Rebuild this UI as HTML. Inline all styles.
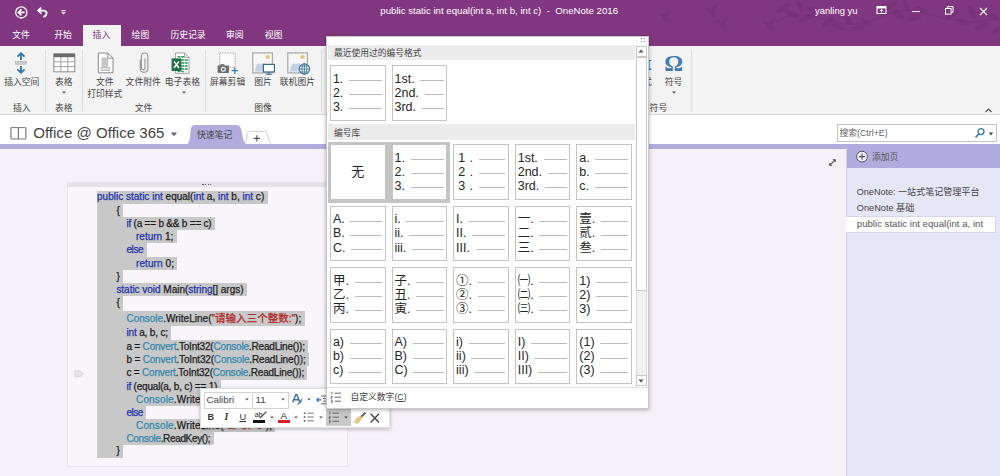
<!DOCTYPE html>
<html lang="zh-CN"><head><meta charset="utf-8"><title>OneNote 2016</title>
<style>
*{box-sizing:border-box;margin:0;padding:0}
html,body{width:1000px;height:476px;overflow:hidden}
body{position:relative;background:#f6f1f9;font-family:"Liberation Sans","Noto Sans CJK SC",sans-serif;}
.a{position:absolute;display:block}
.t{position:absolute;white-space:pre;}
.k{color:#2433ab} .c{color:#3388ad} .s{color:#b32525}
.sel{background:#c8c8c8;position:absolute;}
.z{font-size:10.5px}
.cell{position:absolute;width:55.5px;height:55.5px;background:#fff;border:1px solid #c4c4c4;padding:5.5px 2.6px 0 1.9px;}
.row{display:flex;align-items:center;height:14.1px;font-size:12.5px;line-height:14px;color:#262626;white-space:pre}
.row i{display:block;flex:1;height:1px;background:#bcbcbc;margin-left:5.7px;margin-top:3.6px}
</style></head><body>

<div class="a" style="left:0px;top:0px;width:1000px;height:46.3px;background:#81377f;"></div>
<svg class="a" style="left:0px;top:0px;" width="1000" height="46" viewBox="0 0 1000 46"><ellipse cx="783" cy="8" rx="7.5" ry="3.12" transform="rotate(-35 783 8)" fill="#6e2d6e" opacity="0.45"/><ellipse cx="792" cy="14" rx="7.5" ry="3.12" transform="rotate(25 792 14)" fill="#6e2d6e" opacity="0.45"/><ellipse cx="800" cy="6" rx="6.25" ry="2.6" transform="rotate(60 800 6)" fill="#6e2d6e" opacity="0.45"/><ellipse cx="806" cy="18" rx="7.5" ry="3.12" transform="rotate(-20 806 18)" fill="#6e2d6e" opacity="0.45"/><ellipse cx="812" cy="9" rx="6.25" ry="2.6" transform="rotate(10 812 9)" fill="#6e2d6e" opacity="0.45"/><ellipse cx="828" cy="22" rx="7.5" ry="3.12" transform="rotate(-40 828 22)" fill="#6e2d6e" opacity="0.45"/><ellipse cx="838" cy="27" rx="7.5" ry="2.8600000000000003" transform="rotate(15 838 27)" fill="#6e2d6e" opacity="0.45"/><ellipse cx="848" cy="20" rx="6.25" ry="2.6" transform="rotate(50 848 20)" fill="#6e2d6e" opacity="0.45"/><ellipse cx="858" cy="28" rx="7.5" ry="2.8600000000000003" transform="rotate(-15 858 28)" fill="#6e2d6e" opacity="0.45"/><ellipse cx="866" cy="22" rx="6.25" ry="2.6" transform="rotate(30 866 22)" fill="#6e2d6e" opacity="0.45"/><ellipse cx="890" cy="6" rx="7.5" ry="3.12" transform="rotate(-30 890 6)" fill="#6e2d6e" opacity="0.45"/><ellipse cx="898" cy="14" rx="7.5" ry="3.12" transform="rotate(35 898 14)" fill="#6e2d6e" opacity="0.45"/><ellipse cx="906" cy="5" rx="6.25" ry="2.6" transform="rotate(70 906 5)" fill="#6e2d6e" opacity="0.45"/><ellipse cx="914" cy="18" rx="7.5" ry="3.12" transform="rotate(-10 914 18)" fill="#6e2d6e" opacity="0.45"/><ellipse cx="921" cy="10" rx="6.25" ry="2.6" transform="rotate(20 921 10)" fill="#6e2d6e" opacity="0.45"/><ellipse cx="953" cy="14" rx="7.5" ry="3.12" transform="rotate(-35 953 14)" fill="#6e2d6e" opacity="0.45"/><ellipse cx="962" cy="22" rx="7.5" ry="3.12" transform="rotate(20 962 22)" fill="#6e2d6e" opacity="0.45"/><ellipse cx="972" cy="12" rx="7.5" ry="2.8600000000000003" transform="rotate(55 972 12)" fill="#6e2d6e" opacity="0.45"/><ellipse cx="982" cy="26" rx="7.5" ry="3.12" transform="rotate(-20 982 26)" fill="#6e2d6e" opacity="0.45"/><ellipse cx="992" cy="16" rx="7.5" ry="2.8600000000000003" transform="rotate(25 992 16)" fill="#6e2d6e" opacity="0.45"/><ellipse cx="997" cy="30" rx="6.25" ry="2.6" transform="rotate(-40 997 30)" fill="#6e2d6e" opacity="0.45"/><path d="M776 22C800 6 820 20 846 24S890 4 920 12S970 26 1000 18" stroke="#6e2d6e" stroke-width="1.4" fill="none" opacity="0.4"/><path transform="translate(664.7 15.7) scale(1.2)" d="M-5 -1C-3 -3 -1 -2 0 0C1 -3 3 -5 5 -5C4 -3 3 -1 2 1C3 3 3 4 2 5C0 4 -1 3 -2 1C-3 0 -4 0 -5 -1Z" fill="#6e2d6e" opacity="0.45"/><path transform="translate(711 10.5) scale(1.4)" d="M-5 -1C-3 -3 -1 -2 0 0C1 -3 3 -5 5 -5C4 -3 3 -1 2 1C3 3 3 4 2 5C0 4 -1 3 -2 1C-3 0 -4 0 -5 -1Z" fill="#6e2d6e" opacity="0.45"/><path transform="translate(721.7 22.7) scale(1.3)" d="M-5 -1C-3 -3 -1 -2 0 0C1 -3 3 -5 5 -5C4 -3 3 -1 2 1C3 3 3 4 2 5C0 4 -1 3 -2 1C-3 0 -4 0 -5 -1Z" fill="#6e2d6e" opacity="0.45"/><path transform="translate(769 23.8) scale(1.3)" d="M-5 -1C-3 -3 -1 -2 0 0C1 -3 3 -5 5 -5C4 -3 3 -1 2 1C3 3 3 4 2 5C0 4 -1 3 -2 1C-3 0 -4 0 -5 -1Z" fill="#6e2d6e" opacity="0.45"/></svg>
<svg class="a" style="left:14px;top:5px;" width="16" height="16" viewBox="0 0 16 16"><circle cx="7.3" cy="7.4" r="5.6" fill="none" stroke="#fff" stroke-width="1.3"/><path d="M10.6 7.4H4.8M7.4 4.4L4.4 7.4L7.4 10.4" fill="none" stroke="#fff" stroke-width="1.7"/></svg>
<svg class="a" style="left:36px;top:5px;" width="14" height="14" viewBox="0 0 14 14"><path d="M5.2 2.6L2.2 5.6L5.4 8.6M2.6 5.6H7.6C10.4 5.6 11.2 8 10.2 9.8C9.6 10.9 8.6 11.6 7.4 11.8" fill="none" stroke="#fff" stroke-width="1.8"/></svg>
<svg class="a" style="left:60px;top:9px;" width="8" height="7" viewBox="0 0 8 7"><rect x="1.3" y="1.2" width="4.4" height="1" fill="#fff"/><path d="M1.2 3.2H5.8L3.5 5.6Z" fill="#fff"/></svg>
<div class="t " style="left:380.3px;top:5.20px;font-size:9.67px;line-height:12px;color:#fff;">public static int equal(int a, int b, int c)  -  OneNote 2016</div>
<div class="t " style="left:815px;top:5.20px;font-size:9.46px;line-height:12px;color:#fff;">yanling yu</div>
<svg class="a" style="left:876px;top:5.4px;" width="12" height="11" viewBox="0 0 12 11"><rect x="1" y="1.5" width="9" height="7" fill="none" stroke="#fff" stroke-width="1"/><rect x="1" y="1.5" width="9" height="2" fill="#fff"/><path d="M5.5 7.6V4.6M4 6L5.5 4.5L7 6" stroke="#fff" stroke-width="0.9" fill="none"/></svg>
<div class="a" style="left:912px;top:10.9px;width:7.8px;height:1px;background:#f4eaf3;"></div>
<svg class="a" style="left:944px;top:5.4px;" width="11" height="11" viewBox="0 0 11 11"><rect x="1.5" y="3.5" width="5.6" height="5.6" fill="none" stroke="#fff" stroke-width="1"/><path d="M3.4 3.4V1.6H9V7.2H7.2" fill="none" stroke="#fff" stroke-width="1"/></svg>
<svg class="a" style="left:978px;top:5.5px;" width="11" height="11" viewBox="0 0 11 11"><path d="M2 2L9 9M9 2L2 9" stroke="#fff" stroke-width="1.1"/></svg>
<div class="a" style="left:83.2px;top:24.7px;width:37.8px;height:22px;background:#f3f3f3;"></div>
<div class="t " style="left:12.2px;top:29.00px;font-size:8.8px;line-height:12px;color:#fff;">文件</div>
<div class="t " style="left:54.2px;top:29.00px;font-size:8.8px;line-height:12px;color:#fff;">开始</div>
<div class="t " style="left:92.6px;top:29.00px;font-size:8.8px;line-height:12px;color:#81377f;">插入</div>
<div class="t " style="left:131.6px;top:29.00px;font-size:8.8px;line-height:12px;color:#fff;">绘图</div>
<div class="t " style="left:170.4px;top:29.00px;font-size:8.8px;line-height:12px;color:#fff;">历史记录</div>
<div class="t " style="left:226px;top:29.00px;font-size:8.8px;line-height:12px;color:#fff;">审阅</div>
<div class="t " style="left:264.8px;top:29.00px;font-size:8.8px;line-height:12px;color:#fff;">视图</div>
<div class="a" style="left:0px;top:46.3px;width:1000px;height:68.7px;background:#f3f3f3;border-bottom:1px solid #d8d8d8;"></div>
<div class="a" style="left:45px;top:50px;width:1px;height:62px;background:#dcdcdc;"></div>
<div class="a" style="left:82.4px;top:50px;width:1px;height:62px;background:#dcdcdc;"></div>
<div class="a" style="left:205.4px;top:50px;width:1px;height:62px;background:#dcdcdc;"></div>
<div class="a" style="left:320.6px;top:50px;width:1px;height:62px;background:#dcdcdc;"></div>
<div class="a" style="left:691.4px;top:50px;width:1px;height:62px;background:#dcdcdc;"></div>
<svg class="a" style="left:14px;top:52px;" width="14" height="22" viewBox="0 0 14 22"><path d="M7 1.4V8M3.4 4.6L7 1.2L10.6 4.6" fill="none" stroke="#3b78ad" stroke-width="1.9"/><path d="M7 20.6V14M3.4 17.4L7 20.8L10.6 17.4" fill="none" stroke="#3b78ad" stroke-width="1.9"/><rect x="1.6" y="9.6" width="10.8" height="2.6" fill="#d0d0d0" stroke="#a8a8a8" stroke-width="0.6"/></svg>
<div class="t" style="left:-38.20px;width:120px;text-align:center;top:76.00px;font-size:8.8px;line-height:12px;color:#444;">插入空间</div>
<div class="t" style="left:-38.20px;width:120px;text-align:center;top:102.30px;font-size:8.8px;line-height:12px;color:#444;">插入</div>
<svg class="a" style="left:52.5px;top:53px;" width="23" height="20" viewBox="0 0 23 20"><rect x="0.8" y="0.8" width="21" height="18" fill="#fff" stroke="#8a8a8a" stroke-width="1"/><rect x="0.8" y="0.8" width="21" height="3.4" fill="#6a6a6a"/><path d="M0.8 8.8H21.8M0.8 13.6H21.8M7.8 4.2V18.8M14.8 4.2V18.8" stroke="#9a9a9a" stroke-width="0.9"/></svg>
<div class="t" style="left:3.80px;width:120px;text-align:center;top:76.00px;font-size:8.8px;line-height:12px;color:#444;">表格</div>
<svg class="a" style="left:60.8px;top:90.6px;" width="6" height="4" viewBox="0 0 6 4"><path d="M0.7999999999999998 0.6H5.2L3 2.8000000000000003Z" fill="#666"/></svg>
<div class="t" style="left:3.80px;width:120px;text-align:center;top:102.30px;font-size:8.8px;line-height:12px;color:#444;">表格</div>
<svg class="a" style="left:96.5px;top:52px;" width="18" height="22" viewBox="0 0 18 22"><path d="M1.3 1H10.8L16 6.2V20.8H1.3Z" fill="#fff" stroke="#8a8a8a" stroke-width="1"/><path d="M10.8 1V6.2H16" fill="none" stroke="#8a8a8a" stroke-width="1"/><rect x="5" y="6" width="5.6" height="8.6" fill="#d6d6d6" stroke="#a0a0a0" stroke-width="0.6"/><rect x="4" y="15.6" width="8.6" height="3" fill="#e2e2e2" stroke="#a0a0a0" stroke-width="0.6"/><path d="M6 8H9.6M6 10H9.6M6 12H9.6" stroke="#9a9a9a" stroke-width="0.6"/></svg>
<div class="t" style="left:44.80px;width:120px;text-align:center;top:76.00px;font-size:8.8px;line-height:12px;color:#444;">文件</div>
<div class="t" style="left:44.80px;width:120px;text-align:center;top:87.80px;font-size:8.8px;line-height:12px;color:#444;">打印样式</div>
<svg class="a" style="left:138px;top:52px;" width="12" height="22" viewBox="0 0 12 22"><path d="M2.2 7.6V16.6C2.2 21.6 9.8 21.6 9.8 16.6V4.4C9.8 -0.2 3.4 -0.2 3.4 4.4V15.8C3.4 18.6 7 18.6 7 15.8V6.6" fill="none" stroke="#9a9a9a" stroke-width="1.15"/></svg>
<div class="t" style="left:83.20px;width:120px;text-align:center;top:76.00px;font-size:8.8px;line-height:12px;color:#444;">文件附件</div>
<svg class="a" style="left:170.5px;top:51.5px;" width="22" height="23" viewBox="0 0 22 23"><path d="M4.6 1H13.6L18 5.4V21.4H4.6Z" fill="#fff" stroke="#9a9a9a" stroke-width="0.9"/><path d="M13.6 1V5.4H18" fill="none" stroke="#9a9a9a" stroke-width="0.9"/><g fill="#3a9a68"><rect x="6.6" y="4" width="3" height="1.6"/><rect x="10.2" y="4" width="3" height="1.6"/><rect x="10.2" y="7.2" width="3" height="1.6"/><rect x="13.8" y="7.2" width="3" height="1.6"/><rect x="10.2" y="10.2" width="3" height="1.6"/><rect x="13.8" y="10.2" width="3" height="1.6"/><rect x="10.2" y="13.2" width="3" height="1.6"/><rect x="13.8" y="13.2" width="3" height="1.6"/><rect x="10.2" y="16.2" width="3" height="1.6"/><rect x="13.8" y="16.2" width="3" height="1.6"/><rect x="6.6" y="19" width="3" height="1.2"/><rect x="10.2" y="19" width="3" height="1.2"/></g><rect x="0.6" y="6.4" width="9.8" height="12.6" fill="#1f7145"/><path d="M3 9.4L8 16M8 9.4L3 16" stroke="#fff" stroke-width="1.5"/></svg>
<div class="t" style="left:122.40px;width:120px;text-align:center;top:76.00px;font-size:8.8px;line-height:12px;color:#444;">电子表格</div>
<svg class="a" style="left:181px;top:90.6px;" width="6" height="4" viewBox="0 0 6 4"><path d="M0.7999999999999998 0.6H5.2L3 2.8000000000000003Z" fill="#666"/></svg>
<div class="t" style="left:83.50px;width:120px;text-align:center;top:102.30px;font-size:8.8px;line-height:12px;color:#444;">文件</div>
<svg class="a" style="left:217px;top:52px;" width="23" height="22" viewBox="0 0 23 22"><rect x="2.6" y="1" width="15.6" height="14" fill="#fbfbfb" stroke="#9a9a9a" stroke-width="0.9" stroke-dasharray="1.4 1.2"/><rect x="0.6" y="13.4" width="11.4" height="7.6" rx="0.8" fill="#6e6e6e"/><rect x="3.4" y="12.2" width="4" height="2" fill="#6e6e6e"/><circle cx="6.3" cy="17.2" r="2.5" fill="#f3f3f3"/><circle cx="6.3" cy="17.2" r="1.3" fill="#6e6e6e"/><path d="M14.6 18.6H21M17.8 15.4V21.8" stroke="#3f7fb5" stroke-width="1.4"/></svg>
<div class="t" style="left:167.60px;width:120px;text-align:center;top:76.00px;font-size:8.8px;line-height:12px;color:#444;">屏幕剪辑</div>
<svg class="a" style="left:252.4px;top:52px;" width="24" height="23" viewBox="0 0 24 23"><rect x="0.8" y="0.9" width="19.6" height="20" fill="#f6f6f6" stroke="#adadad" stroke-width="1.3"/><circle cx="15.6" cy="5" r="2.1" fill="#e6c67c"/><path d="M2.6 19.4L4.4 13.6Q6.4 9.8 8.6 12.6L10 11.4Q12 10.2 13.2 12.6L15.4 19.4Z" fill="#c1d0e6"/><rect x="11.4" y="12.4" width="11" height="7.6" fill="#fbfdff" stroke="#3c6a86" stroke-width="1.2"/><path d="M16.9 20V22M14 22.3H19.8" stroke="#3c6a86" stroke-width="1.1"/></svg>
<div class="t" style="left:203.00px;width:120px;text-align:center;top:76.00px;font-size:8.8px;line-height:12px;color:#444;">图片</div>
<svg class="a" style="left:287px;top:52px;" width="24" height="23" viewBox="0 0 24 23"><rect x="0.8" y="0.9" width="19.6" height="20" fill="#f6f6f6" stroke="#adadad" stroke-width="1.3"/><circle cx="15.6" cy="5" r="2.1" fill="#e6c67c"/><path d="M2.6 19.4L4.4 13.6Q6.4 9.8 8.6 12.6L10 11.4Q12 10.2 13.2 12.6L15.4 19.4Z" fill="#c1d0e6"/><circle cx="17.4" cy="17" r="5.2" fill="#eef5f9" stroke="#3c7391" stroke-width="1.1"/><path d="M12.2 17H22.6M17.4 11.8V22.2M13.2 14H21.6M13.2 20H21.6" stroke="#3c7391" stroke-width="0.8" fill="none"/><ellipse cx="17.4" cy="17" rx="2.4" ry="5.2" fill="none" stroke="#3c7391" stroke-width="0.8"/></svg>
<div class="t" style="left:237.40px;width:120px;text-align:center;top:76.00px;font-size:8.8px;line-height:12px;color:#444;">联机图片</div>
<div class="t" style="left:203.00px;width:120px;text-align:center;top:102.30px;font-size:8.8px;line-height:12px;color:#444;">图像</div>
<div class="t" style="left:631.00px;width:30px;text-align:center;top:52.00px;font-size:20px;line-height:22px;color:#3f7fb5;font-family:&quot;Liberation Serif&quot;,serif;font-weight:bold;">π</div>
<div class="t" style="left:583.00px;width:120px;text-align:center;top:76.00px;font-size:8.8px;line-height:12px;color:#444;">公式</div>
<div class="t" style="left:658.60px;width:30px;text-align:center;top:50.60px;font-size:23.5px;line-height:24px;color:#3f7ab2;font-family:&quot;Liberation Serif&quot;,serif;font-weight:bold;">Ω</div>
<div class="t" style="left:613.60px;width:120px;text-align:center;top:76.00px;font-size:8.8px;line-height:12px;color:#444;">符号</div>
<svg class="a" style="left:670.8px;top:90.6px;" width="6" height="4" viewBox="0 0 6 4"><path d="M0.7999999999999998 0.6H5.2L3 2.8000000000000003Z" fill="#666"/></svg>
<div class="t" style="left:598.40px;width:120px;text-align:center;top:102.30px;font-size:8.8px;line-height:12px;color:#444;">符号</div>
<svg class="a" style="left:984px;top:106.5px;" width="9" height="7" viewBox="0 0 9 7"><path d="M1.6 5L4.5 2L7.4 5" fill="none" stroke="#555" stroke-width="1.2"/></svg>
<div class="a" style="left:0px;top:115px;width:1000px;height:29.2px;background:#fff;"></div>
<svg class="a" style="left:9.5px;top:126px;" width="18" height="15" viewBox="0 0 18 15"><path d="M1 1.6H8.4V13H1ZM8.4 1.6H15.8V13H8.4Z" fill="#fff" stroke="#777" stroke-width="1"/><path d="M0.2 4H1.4M0.2 7H1.4M0.2 10H1.4M15.6 4H16.8M15.6 7H16.8M15.6 10H16.8" stroke="#777" stroke-width="0.8"/></svg>
<div class="t " style="left:33.2px;top:124.40px;font-size:15.08px;line-height:18px;color:#444;">Office @ Office 365</div>
<svg class="a" style="left:170px;top:131.5px;" width="8" height="5" viewBox="0 0 8 5"><path d="M0.8 0.6H7.2L4 4.2Z" fill="#666"/></svg>
<svg class="a" style="left:186px;top:124px;" width="62" height="21" viewBox="0 0 62 21"><path d="M1 20.5C3.6 19 4 14 4.6 7C5 2.4 6.4 1 9.6 1H50C53.4 1 54.6 2.6 55.6 7C57 14 57.6 19 61 20.5Z" fill="#b2acde"/></svg>
<div class="t " style="left:197px;top:129.20px;font-size:8.8px;line-height:12px;color:#444;">快速笔记</div>
<svg class="a" style="left:243px;top:129.5px;" width="30" height="15" viewBox="0 0 30 15"><path d="M1.5 14.5C3.4 13 3.6 9 4.2 5C4.6 2.2 5.6 1.4 7.6 1.4H21C23.2 1.4 24 2.4 24.6 5C25.6 9 26 13 28.5 14.5" fill="#fff" stroke="#c6c6c6" stroke-width="0.9"/><path d="M10.6 8.4H17M13.8 5.2V11.6" stroke="#555" stroke-width="1.1"/></svg>
<div class="a" style="left:837px;top:124px;width:159.6px;height:18.2px;background:#fff;border:1px solid #c2c2c2;"></div>
<div class="t " style="left:839.4px;top:127.00px;font-size:8.83px;line-height:12px;color:#666;">搜索(Ctrl+E)</div>
<svg class="a" style="left:974px;top:127px;" width="12" height="12" viewBox="0 0 12 12"><circle cx="7" cy="4.6" r="3" fill="none" stroke="#3a76b0" stroke-width="1.3"/><path d="M5 6.8L1.6 10.4" stroke="#3a76b0" stroke-width="1.6"/></svg>
<svg class="a" style="left:988px;top:131.5px;" width="6" height="4" viewBox="0 0 6 4"><path d="M0.6 0.6H5.4L3 3.2Z" fill="#444"/></svg>
<div class="a" style="left:0px;top:144.2px;width:1000px;height:4.6px;background:#b2acde;"></div>
<div class="a" style="left:846.4px;top:144px;width:153.6px;height:332px;background:#e6e7f6;"></div>
<div class="a" style="left:846.4px;top:144.2px;width:153.6px;height:24.2px;background:#b2acde;"></div>
<div class="a" style="left:845.6px;top:148.4px;width:1px;height:328px;background:#d4cfe6;"></div>
<svg class="a" style="left:855px;top:150px;" width="14" height="14" viewBox="0 0 14 14"><circle cx="7" cy="6.6" r="5.4" fill="#f1eef9" stroke="#555" stroke-width="1"/><path d="M3.8 6.6H10.2M7 3.4V9.8" stroke="#555" stroke-width="1.1"/></svg>
<div class="t " style="left:872px;top:150.60px;font-size:8.8px;line-height:12px;color:#555;">添加页</div>
<div class="t " style="left:856.8px;top:186.00px;font-size:9.05px;line-height:12px;color:#444;">OneNote: 一站式笔记管理平台</div>
<div class="t " style="left:856.8px;top:201.70px;font-size:9.2px;line-height:12px;color:#444;">OneNote 基础</div>
<div class="a" style="left:846.4px;top:216.2px;width:149.4px;height:16.4px;background:#fff;border:1px solid #d8d4ea;border-left:none;"></div>
<div class="t " style="left:856.8px;top:218.20px;font-size:9.65px;line-height:12px;color:#555;">public static int equal(int a, int</div>
<svg class="a" style="left:828px;top:158px;" width="9" height="9" viewBox="0 0 9 9"><path d="M1.8 7.2L7.2 1.8" stroke="#555" stroke-width="1.2"/><path d="M4.4 1.2H7.8V4.6ZM1.2 4.4V7.8H4.6Z" fill="#555"/></svg>
<div class="a" style="left:66.6px;top:181.6px;width:281.4px;height:285.4px;background:#f8f5fb;border:1px solid #e9e4ef;"></div>
<div class="a" style="left:66.6px;top:181.6px;width:281.4px;height:5.8px;background:#e5e3e9;"></div>
<div class="a" style="left:202.4px;top:184px;width:1.2px;height:1.2px;background:#555;"></div>
<div class="a" style="left:205.0px;top:184px;width:1.2px;height:1.2px;background:#555;"></div>
<div class="a" style="left:207.6px;top:184px;width:1.2px;height:1.2px;background:#555;"></div>
<div class="a" style="left:210.20000000000002px;top:184px;width:1.2px;height:1.2px;background:#555;"></div>
<svg class="a" style="left:74px;top:369.5px;" width="11" height="8" viewBox="0 0 11 8"><path d="M0.8 0.8H6.4L9.8 3.8L6.4 6.8H0.8Z" fill="#e6e2ea" stroke="#d2cdd8" stroke-width="0.8"/></svg>
<div class="a" style="left:97px;top:191.20px;height:13.00px;"><span style="display:inline-block;height:100%;background:#c8c8c8;padding-left:0.0px;padding-right:3.4px;font-size:10px;letter-spacing:0.010px;line-height:12.95px;color:#1c1c1c;-webkit-text-stroke:0.25px;white-space:pre;vertical-align:top"><span class="k">public static int</span> equal(<span class="k">int</span> a, <span class="k">int</span> b, <span class="k">int</span> c)</span></div>
<div class="a" style="left:97px;top:204.15px;height:13.15px;"><span style="display:inline-block;height:100%;background:#c8c8c8;padding-left:19.4px;padding-right:3.4px;font-size:10px;line-height:13.10px;color:#1c1c1c;-webkit-text-stroke:0.25px;white-space:pre;vertical-align:top">{</span></div>
<div class="a" style="left:97px;top:217.25px;height:13.15px;"><span style="display:inline-block;height:100%;background:#c8c8c8;padding-left:29.4px;padding-right:3.4px;font-size:10px;letter-spacing:-0.210px;line-height:13.10px;color:#1c1c1c;-webkit-text-stroke:0.25px;white-space:pre;vertical-align:top"><span class="k">if</span> (a == b &amp;&amp; b == c)</span></div>
<div class="a" style="left:97px;top:230.35px;height:13.15px;"><span style="display:inline-block;height:100%;background:#c8c8c8;padding-left:39.0px;padding-right:3.4px;font-size:10px;letter-spacing:0.006px;line-height:13.10px;color:#1c1c1c;-webkit-text-stroke:0.25px;white-space:pre;vertical-align:top"><span class="k">return</span> 1;</span></div>
<div class="a" style="left:97px;top:243.45px;height:13.15px;"><span style="display:inline-block;height:100%;background:#c8c8c8;padding-left:29.4px;padding-right:3.4px;font-size:10px;letter-spacing:-0.365px;line-height:13.10px;color:#1c1c1c;-webkit-text-stroke:0.25px;white-space:pre;vertical-align:top"><span class="k">else</span></span></div>
<div class="a" style="left:97px;top:256.55px;height:13.15px;"><span style="display:inline-block;height:100%;background:#c8c8c8;padding-left:39.0px;padding-right:3.4px;font-size:10px;letter-spacing:0.083px;line-height:13.10px;color:#1c1c1c;-webkit-text-stroke:0.25px;white-space:pre;vertical-align:top"><span class="k">return</span> 0;</span></div>
<div class="a" style="left:97px;top:269.65px;height:13.15px;"><span style="display:inline-block;height:100%;background:#c8c8c8;padding-left:19.4px;padding-right:3.4px;font-size:10px;line-height:13.10px;color:#1c1c1c;-webkit-text-stroke:0.25px;white-space:pre;vertical-align:top">}</span></div>
<div class="a" style="left:97px;top:282.75px;height:13.15px;"><span style="display:inline-block;height:100%;background:#c8c8c8;padding-left:19.4px;padding-right:3.4px;font-size:10px;letter-spacing:-0.024px;line-height:13.10px;color:#1c1c1c;-webkit-text-stroke:0.25px;white-space:pre;vertical-align:top"><span class="k">static void</span> Main(<span class="k">string</span>[] args)</span></div>
<div class="a" style="left:97px;top:295.85px;height:14.70px;"><span style="display:inline-block;height:100%;background:#c8c8c8;padding-left:19.4px;padding-right:3.4px;font-size:10px;line-height:14.65px;color:#1c1c1c;-webkit-text-stroke:0.25px;white-space:pre;vertical-align:top">{</span></div>
<div class="a" style="left:97px;top:310.50px;height:15.55px;"><span style="display:inline-block;height:100%;background:#c8c8c8;padding-left:29.4px;padding-right:3.4px;font-size:10px;letter-spacing:0.014px;line-height:15.50px;color:#1c1c1c;-webkit-text-stroke:0.25px;white-space:pre;vertical-align:top"><span class="c">Console</span>.WriteLine(<span class="s">"<span class="z">请输入三个整数</span>:"</span>);</span></div>
<div class="a" style="left:97px;top:326.00px;height:14.00px;"><span style="display:inline-block;height:100%;background:#c8c8c8;padding-left:29.4px;padding-right:3.4px;font-size:10px;letter-spacing:-0.147px;line-height:13.95px;color:#1c1c1c;-webkit-text-stroke:0.25px;white-space:pre;vertical-align:top"><span class="k">int</span> a, b, c;</span></div>
<div class="a" style="left:97px;top:339.95px;height:13.20px;"><span style="display:inline-block;height:100%;background:#c8c8c8;padding-left:29.4px;padding-right:3.4px;font-size:10px;letter-spacing:-0.189px;line-height:13.15px;color:#1c1c1c;-webkit-text-stroke:0.25px;white-space:pre;vertical-align:top">a = <span class="c">Convert</span>.ToInt32(<span class="c">Console</span>.ReadLine());</span></div>
<div class="a" style="left:97px;top:353.10px;height:13.25px;"><span style="display:inline-block;height:100%;background:#c8c8c8;padding-left:29.4px;padding-right:3.4px;font-size:10px;letter-spacing:-0.172px;line-height:13.20px;color:#1c1c1c;-webkit-text-stroke:0.25px;white-space:pre;vertical-align:top">b = <span class="c">Convert</span>.ToInt32(<span class="c">Console</span>.ReadLine());</span></div>
<div class="a" style="left:97px;top:366.30px;height:13.25px;"><span style="display:inline-block;height:100%;background:#c8c8c8;padding-left:29.4px;padding-right:3.4px;font-size:10px;letter-spacing:-0.195px;line-height:13.20px;color:#1c1c1c;-webkit-text-stroke:0.25px;white-space:pre;vertical-align:top">c = <span class="c">Convert</span>.ToInt32(<span class="c">Console</span>.ReadLine());</span></div>
<div class="a" style="left:97px;top:379.50px;height:13.20px;"><span style="display:inline-block;height:100%;background:#c8c8c8;padding-left:29.4px;padding-right:3.4px;font-size:10px;letter-spacing:-0.200px;line-height:13.15px;color:#1c1c1c;-webkit-text-stroke:0.25px;white-space:pre;vertical-align:top"><span class="k">if</span> (equal(a, b, c) == 1)</span></div>
<div class="a" style="left:97px;top:392.65px;height:13.15px;"><span style="display:inline-block;height:100%;background:#c8c8c8;padding-left:39.0px;padding-right:3.4px;font-size:10px;letter-spacing:0.16px;line-height:13.10px;color:#1c1c1c;-webkit-text-stroke:0.25px;white-space:pre;vertical-align:top"><span class="c">Console</span>.WriteLine(<span class="s">"a=b=c"</span>);</span></div>
<div class="a" style="left:97px;top:405.75px;height:13.15px;"><span style="display:inline-block;height:100%;background:#c8c8c8;padding-left:29.4px;padding-right:3.4px;font-size:10px;letter-spacing:-0.465px;line-height:13.10px;color:#1c1c1c;-webkit-text-stroke:0.25px;white-space:pre;vertical-align:top"><span class="k">else</span></span></div>
<div class="a" style="left:97px;top:418.85px;height:13.20px;"><span style="display:inline-block;height:100%;background:#c8c8c8;padding-left:39.0px;padding-right:3.4px;font-size:10px;letter-spacing:0.16px;line-height:13.15px;color:#1c1c1c;-webkit-text-stroke:0.25px;white-space:pre;vertical-align:top"><span class="c">Console</span>.WriteLine(<span class="s">"a!=b!=c"</span>);</span></div>
<div class="a" style="left:97px;top:432.00px;height:13.20px;"><span style="display:inline-block;height:100%;background:#c8c8c8;padding-left:29.4px;padding-right:3.4px;font-size:10px;letter-spacing:-0.348px;line-height:13.15px;color:#1c1c1c;-webkit-text-stroke:0.25px;white-space:pre;vertical-align:top"><span class="c">Console</span>.ReadKey();</span></div>
<div class="a" style="left:97px;top:445.15px;height:12.90px;"><span style="display:inline-block;height:100%;background:#c8c8c8;padding-left:19.4px;padding-right:3.4px;font-size:10px;line-height:12.85px;color:#1c1c1c;-webkit-text-stroke:0.25px;white-space:pre;vertical-align:top">}</span></div>
<div class="a" style="left:200px;top:388.3px;width:189.6px;height:40.2px;background:#fff;box-shadow:0 1px 4px rgba(0,0,0,.28);border:1px solid #e0e0e0;"></div>
<div class="a" style="left:203.6px;top:391.6px;width:49px;height:17px;background:#fff;border:1px solid #d2d2d2;"></div>
<div class="a" style="left:252.2px;top:391.6px;width:36.4px;height:17px;background:#fff;border:1px solid #d2d2d2;"></div>
<div class="t " style="left:206.4px;top:394.20px;font-size:9.8px;line-height:12px;color:#444;">Calibri</div>
<div class="t " style="left:255.6px;top:394.20px;font-size:9.8px;line-height:12px;color:#444;">11</div>
<svg class="a" style="left:244px;top:398.4px;" width="6" height="4" viewBox="0 0 6 4"><path d="M1.2 0.6H4.8L3 2.4Z" fill="#555"/></svg>
<svg class="a" style="left:280.2px;top:398.4px;" width="6" height="4" viewBox="0 0 6 4"><path d="M1.2 0.6H4.8L3 2.4Z" fill="#555"/></svg>
<svg class="a" style="left:291px;top:393px;" width="14" height="14" viewBox="0 0 14 14"><path d="M1.6 9.6L4.8 1.8H5.8L9 9.6M2.9 6.7H7.7" fill="none" stroke="#3a6ea5" stroke-width="1.4"/><path d="M5.6 12.4L7.4 9.6L11.6 4.6L10.4 9.4Z" fill="#5f7f96"/></svg>
<svg class="a" style="left:305.6px;top:398.4px;" width="6" height="4" viewBox="0 0 6 4"><path d="M1.2 0.6H4.8L3 2.4Z" fill="#555"/></svg>
<svg class="a" style="left:315.5px;top:395px;" width="12" height="10" viewBox="0 0 12 10"><path d="M5 1H11.4M7 3.6H11.4M7 6.2H11.4M5 8.8H11.4" stroke="#666" stroke-width="1"/><path d="M5.4 4.9H0.8M2.8 2.9L0.8 4.9L2.8 6.9" stroke="#2f6fb0" stroke-width="1.1" fill="none"/></svg>
<div class="t " style="left:207.6px;top:411.00px;font-size:9px;line-height:12px;color:#333;font-weight:bold;">B</div>
<div class="t " style="left:224.4px;top:411.00px;font-size:9.6px;line-height:12px;color:#333;font-style:italic;font-family:&quot;Liberation Serif&quot;,serif;font-weight:bold;">I</div>
<div class="t " style="left:239.4px;top:411.00px;font-size:9.2px;line-height:12px;color:#333;text-decoration:underline;">U</div>
<div class="t " style="left:254.4px;top:410.40px;font-size:7.6px;line-height:10px;color:#333;">ab</div>
<svg class="a" style="left:256px;top:409.5px;" width="12" height="9" viewBox="0 0 12 9"><path d="M4 8L10.4 1.6" stroke="#555" stroke-width="1.3"/></svg>
<div class="a" style="left:253px;top:420.2px;width:12px;height:3px;background:#111;"></div>
<svg class="a" style="left:268.5px;top:416.4px;" width="6" height="4" viewBox="0 0 6 4"><path d="M1.2 0.6H4.8L3 2.4Z" fill="#555"/></svg>
<div class="t " style="left:280.4px;top:410.40px;font-size:9.8px;line-height:12px;color:#333;">A</div>
<div class="a" style="left:278px;top:420.2px;width:11.8px;height:2.8px;background:#d92020;"></div>
<svg class="a" style="left:293px;top:416.4px;" width="6" height="4" viewBox="0 0 6 4"><path d="M1.2 0.6H4.8L3 2.4Z" fill="#555"/></svg>
<svg class="a" style="left:303px;top:411.2px;" width="12" height="12" viewBox="0 0 12 12"><rect x="0.8" y="1.4" width="1.6" height="1.6" fill="#555"/><rect x="0.8" y="5.2" width="1.6" height="1.6" fill="#555"/><rect x="0.8" y="9" width="1.6" height="1.6" fill="#555"/><path d="M4.4 2.2H10.8M4.4 6H10.8M4.4 9.8H10.8" stroke="#777" stroke-width="1"/></svg>
<svg class="a" style="left:318px;top:416.4px;" width="6" height="4" viewBox="0 0 6 4"><path d="M1.2 0.6H4.8L3 2.4Z" fill="#555"/></svg>
<div class="a" style="left:326.2px;top:408.8px;width:24.4px;height:17.2px;background:#c9c9c9;"></div>
<svg class="a" style="left:327.8px;top:411.2px;" width="12" height="13" viewBox="0 0 12 13"><path d="M4.6 2.2H11M4.6 6.2H11M4.6 10.2H11" stroke="#666" stroke-width="1"/><path d="M1 1.2H2V3.4M1 5.2H2.2V6.4H1V7.4H2.2M1 9.2H2.2V11.6H1M1 10.4H2.2" stroke="#555" stroke-width="0.7" fill="none"/></svg>
<svg class="a" style="left:342.8px;top:416.4px;" width="6" height="4" viewBox="0 0 6 4"><path d="M1.2 0.6H4.8L3 2.4Z" fill="#444"/></svg>
<svg class="a" style="left:353px;top:411px;" width="14" height="14" viewBox="0 0 14 14"><path d="M12.4 1.6L7.6 6.4" stroke="#5a5a5a" stroke-width="2"/><path d="M7.8 5L9.4 6.6L4.6 12.4L1.2 11L3 9.6L2.8 8Z" fill="#e3c98a" stroke="#c9a24e" stroke-width="0.5"/></svg>
<svg class="a" style="left:369px;top:412px;" width="12" height="12" viewBox="0 0 12 12"><path d="M1.6 1.8L10 10.4M10 1.8L1.6 10.4" stroke="#444" stroke-width="1.4"/></svg>
<div class="a" style="left:326px;top:35.6px;width:322.6px;height:373.4px;background:#fff;border:1px solid #c8c8c8;box-shadow:0 1px 4px rgba(0,0,0,.3);"></div>
<div class="a" style="left:641.4px;top:38.4px;width:1px;height:1px;background:#888;"></div>
<div class="a" style="left:643.6px;top:38.4px;width:1px;height:1px;background:#888;"></div>
<div class="a" style="left:641.4px;top:40.8px;width:1px;height:1px;background:#888;"></div>
<div class="a" style="left:643.6px;top:40.8px;width:1px;height:1px;background:#888;"></div>
<div class="a" style="left:327.6px;top:44.8px;width:307.6px;height:15.4px;background:#ececec;"></div>
<div class="t " style="left:334px;top:47.00px;font-size:8.75px;line-height:12px;color:#444;">最近使用过的编号格式</div>
<div class="a" style="left:327.6px;top:124.2px;width:307.6px;height:15.6px;background:#ececec;"></div>
<div class="t " style="left:334px;top:126.70px;font-size:8.75px;line-height:12px;color:#444;">编号库</div>
<div class="a" style="left:635.6px;top:46px;width:11px;height:340.4px;background:#f1f1f1;border:1px solid #dcdcdc;"></div>
<div class="a" style="left:635.6px;top:46px;width:11px;height:10.6px;background:#fff;border:1px solid #c8c8c8;"></div>
<svg class="a" style="left:638.3px;top:49px;" width="6" height="4" viewBox="0 0 6 4"><path d="M0.4 3.6H5.6L3 0.6Z" fill="#555"/></svg>
<div class="a" style="left:635.6px;top:375.4px;width:11px;height:10.4px;background:#fff;border:1px solid #c8c8c8;"></div>
<svg class="a" style="left:638.1px;top:378.8px;" width="6" height="4" viewBox="0 0 6 4"><path d="M0.4 0.4H5.6L3 3.4Z" fill="#555"/></svg>
<div class="a" style="left:635.6px;top:56.6px;width:11px;height:234px;background:#fff;border:1px solid #c8c8c8;"></div>
<div class="cell" style="left:330px;top:65px;"><div class="row">1.<i></i></div><div class="row">2.<i></i></div><div class="row">3.<i></i></div></div>
<div class="cell" style="left:391.6px;top:65px;"><div class="row">1st.<i></i></div><div class="row">2nd.<i></i></div><div class="row">3rd.<i></i></div></div>
<div class="a" style="left:327.6px;top:141.8px;width:122.2px;height:60.8px;background:#c4c4c4;"></div>
<div class="cell" style="left:330px;top:144.3px;padding:0;text-align:center;font-size:13px;line-height:54px;color:#262626">无</div>
<div class="cell" style="left:391.6px;top:144.3px;"><div class="row">1.<i></i></div><div class="row">2.<i></i></div><div class="row">3.<i></i></div></div>
<div class="cell" style="left:453.2px;top:144.3px;"><div class="row"><span style="margin-left:2.2px;letter-spacing:0.35px">1 .</span><i></i></div><div class="row"><span style="margin-left:2.2px;letter-spacing:0.35px">2 .</span><i></i></div><div class="row"><span style="margin-left:2.2px;letter-spacing:0.35px">3 .</span><i></i></div></div>
<div class="cell" style="left:514.8px;top:144.3px;"><div class="row">1st.<i></i></div><div class="row">2nd.<i></i></div><div class="row">3rd.<i></i></div></div>
<div class="cell" style="left:576.4px;top:144.3px;"><div class="row">a.<i></i></div><div class="row">b.<i></i></div><div class="row">c.<i></i></div></div>
<div class="cell" style="left:330px;top:205.8px;"><div class="row">A.<i></i></div><div class="row">B.<i></i></div><div class="row">C.<i></i></div></div>
<div class="cell" style="left:391.6px;top:205.8px;"><div class="row">i.<i></i></div><div class="row">ii.<i></i></div><div class="row">iii.<i></i></div></div>
<div class="cell" style="left:453.2px;top:205.8px;"><div class="row">I.<i></i></div><div class="row">II.<i></i></div><div class="row">III.<i></i></div></div>
<div class="cell" style="left:514.8px;top:205.8px;"><div class="row">一.<i></i></div><div class="row">二.<i></i></div><div class="row">三.<i></i></div></div>
<div class="cell" style="left:576.4px;top:205.8px;"><div class="row">壹.<i></i></div><div class="row">贰.<i></i></div><div class="row">叁.<i></i></div></div>
<div class="cell" style="left:330px;top:267.3px;"><div class="row">甲.<i></i></div><div class="row">乙.<i></i></div><div class="row">丙.<i></i></div></div>
<div class="cell" style="left:391.6px;top:267.3px;"><div class="row">子.<i></i></div><div class="row">丑.<i></i></div><div class="row">寅.<i></i></div></div>
<div class="cell" style="left:453.2px;top:267.3px;"><div class="row">①.<i></i></div><div class="row">②.<i></i></div><div class="row">③.<i></i></div></div>
<div class="cell" style="left:514.8px;top:267.3px;"><div class="row">㈠.<i></i></div><div class="row">㈡.<i></i></div><div class="row">㈢.<i></i></div></div>
<div class="cell" style="left:576.4px;top:267.3px;"><div class="row">1)<i></i></div><div class="row">2)<i></i></div><div class="row">3)<i></i></div></div>
<div class="cell" style="left:330px;top:328.6px;"><div class="row">a)<i></i></div><div class="row">b)<i></i></div><div class="row">c)<i></i></div></div>
<div class="cell" style="left:391.6px;top:328.6px;"><div class="row">A)<i></i></div><div class="row">B)<i></i></div><div class="row">C)<i></i></div></div>
<div class="cell" style="left:453.2px;top:328.6px;"><div class="row">i)<i></i></div><div class="row">ii)<i></i></div><div class="row">iii)<i></i></div></div>
<div class="cell" style="left:514.8px;top:328.6px;"><div class="row">I)<i></i></div><div class="row">II)<i></i></div><div class="row">III)<i></i></div></div>
<div class="cell" style="left:576.4px;top:328.6px;"><div class="row">(1)<i></i></div><div class="row">(2)<i></i></div><div class="row">(3)<i></i></div></div>
<div class="a" style="left:327px;top:387px;width:320.6px;height:1px;background:#e2e2e2;"></div>
<svg class="a" style="left:329.6px;top:390.8px;" width="12" height="13" viewBox="0 0 12 13"><path d="M4.6 2.2H11M4.6 6.2H11M4.6 10.2H11" stroke="#666" stroke-width="1"/><path d="M1 1.2H2V3.4M1 5.2H2.2V6.4H1V7.4H2.2M1 9.2H2.2V11.6H1M1 10.4H2.2" stroke="#555" stroke-width="0.7" fill="none"/></svg>
<div class="t " style="left:350.4px;top:391.40px;font-size:8.8px;line-height:12px;color:#444;">自定义数字(<span style="text-decoration:underline">C</span>)</div>
</body></html>
